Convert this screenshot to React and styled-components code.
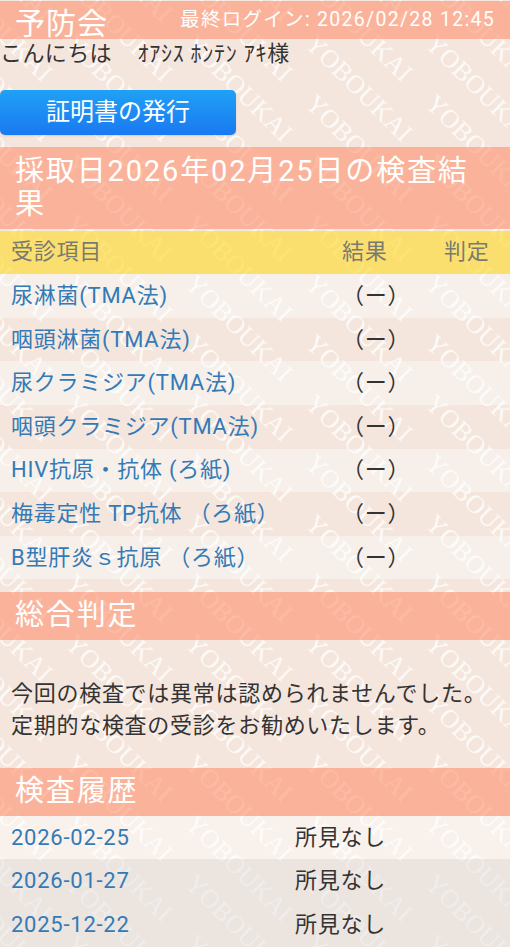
import React from 'react';
import styled, { createGlobalStyle } from 'styled-components';

const GlobalStyle = createGlobalStyle`
  html, body {
    margin: 0;
    padding: 0;
    background: #f5e6dd;
  }
  body {
    font-family: Roboto, "Noto Sans CJK JP", sans-serif;
    color: #333;
    font-size: 22px;
  }
`;

const Page = styled.div`
  position: relative;
  width: 510px;
  height: 947px;
  overflow: hidden;
`;

const Watermark = styled.svg`
  position: absolute;
  inset: 0;
  pointer-events: none;
`;

const MarkText = styled.text`
  font-family: "Liberation Serif", serif;
  font-size: 26px;
  fill: #fff;
  fill-opacity: 0.8;
`;

const Content = styled.div`
  position: relative;
  padding-top: 1px;
`;

const TopBar = styled.header`
  display: flex;
  justify-content: space-between;
  align-items: flex-start;
  height: 38px;
  padding: 0 15px;
  background: rgba(253, 145, 110, 0.6);
  color: #fff;
`;

const Brand = styled.h1`
  margin: 0;
  font-size: 30px;
  font-weight: 400;
  letter-spacing: 1px;
  line-height: 45px;
  height: 38px;
`;

const LastLogin = styled.div`
  font-size: 19.5px;
  line-height: 38px;
  letter-spacing: 1.3px;
  white-space: nowrap;
`;

const Greeting = styled.p`
  margin: 0;
  height: 51px;
  font-size: 22px;
  line-height: 30px;
  letter-spacing: 0.4px;
`;

const Kana = styled.span`
  margin-left: 3px;
  letter-spacing: 0.75px;
`;

const IssueButton = styled.button`
  display: block;
  width: 236px;
  height: 45px;
  margin: 0 0 12px;
  padding: 0;
  border: 0;
  border-radius: 5px;
  background: linear-gradient(#1fa1f5, #1a79f2);
  color: #fff;
  font: inherit;
  font-size: 24px;
  line-height: 45px;
  box-shadow: 0 1px 2px rgba(0, 0, 0, 0.12);
`;

const SectionTitle = styled.h2`
  margin: ${(p) => p.$gap || 0} 0 0;
  padding: 7.5px 15px;
  background: rgba(253, 145, 110, 0.6);
  color: #fff;
  font-size: 29px;
  font-weight: 400;
  letter-spacing: 1.85px;
  line-height: 33.3px;
`;

const Row = styled.div`
  display: grid;
  grid-template-columns: ${(p) => p.$cols};
  align-items: center;
  height: 43.6px;
  padding: 0 11px;
  background: ${(p) => p.$bg};
  letter-spacing: 0.75px;
  line-height: 30px;
`;

const TableHead = styled(Row)`
  height: 43.6px;
  margin-top: 2px;
  color: #7a7a70;
`;

const LinkText = styled.a`
  color: #337ab7;
  text-decoration: none;
`;

const Summary = styled.p`
  margin: 0;
  height: 127.4px;
  padding: 38px 11px 0;
  box-sizing: border-box;
  font-size: 22px;
  line-height: 32px;
  letter-spacing: 0.72px;
`;

const tests = [
  '尿淋菌(TMA法)',
  '咽頭淋菌(TMA法)',
  '尿クラミジア(TMA法)',
  '咽頭クラミジア(TMA法)',
  'HIV抗原・抗体 (ろ紙)',
  '梅毒定性 TP抗体 （ろ紙）',
  'B型肝炎ｓ抗原 （ろ紙）',
];

const history = [
  { date: '2026-02-25', bg: 'rgba(255, 255, 255, 0.45)' },
  { date: '2026-01-27', bg: 'rgba(225, 226, 225, 0.5)' },
  { date: '2025-12-22', bg: 'rgba(225, 226, 225, 0.5)' },
];

const marks = [];
for (let row = -3; row < 17; row++) {
  for (let col = -1; col < 5; col++) {
    marks.push({ x: 64 + col * 120, y: 45 + row * 60 });
  }
}

const TABLE_COLS = '331px 102px 1fr';
const HISTORY_COLS = '284px 1fr';

export default function App() {
  return (
    <Page>
      <GlobalStyle />
      <Watermark width="510" height="947" aria-hidden="true">
        {marks.map((m) => (
          <MarkText key={`${m.x}-${m.y}`} x={m.x} y={m.y} transform={`rotate(45 ${m.x} ${m.y})`}>
            YOBOUKAI
          </MarkText>
        ))}
      </Watermark>
      <Content>
        <TopBar>
          <Brand>予防会</Brand>
          <LastLogin>最終ログイン: 2026/02/28 12:45</LastLogin>
        </TopBar>
        <Greeting>こんにちは　<Kana>ｵｱｼｽ ﾎﾝﾃﾝ ｱｷ</Kana>様</Greeting>
        <IssueButton>証明書の発行</IssueButton>
        <SectionTitle>採取日2026年02月25日の検査結果</SectionTitle>
        <TableHead $cols={TABLE_COLS} $bg="rgba(253, 220, 63, 0.7)">
          <span>受診項目</span>
          <span>結果</span>
          <span>判定</span>
        </TableHead>
        {tests.map((name, i) => (
          <Row key={name} $cols={TABLE_COLS} $bg={i % 2 === 0 ? 'rgba(249, 255, 255, 0.4)' : 'transparent'}>
            <LinkText>{name}</LinkText>
            <span>（ー）</span>
            <span />
          </Row>
        ))}
        <SectionTitle $gap="12.5px">総合判定</SectionTitle>
        <Summary>
          今回の検査では異常は認められませんでした。
          <br />
          定期的な検査の受診をお勧めいたします。
        </Summary>
        <SectionTitle>検査履歴</SectionTitle>
        {history.map((h) => (
          <Row key={h.date} $cols={HISTORY_COLS} $bg={h.bg}>
            <LinkText>{h.date}</LinkText>
            <span>所見なし</span>
          </Row>
        ))}
      </Content>
    </Page>
  );
}
